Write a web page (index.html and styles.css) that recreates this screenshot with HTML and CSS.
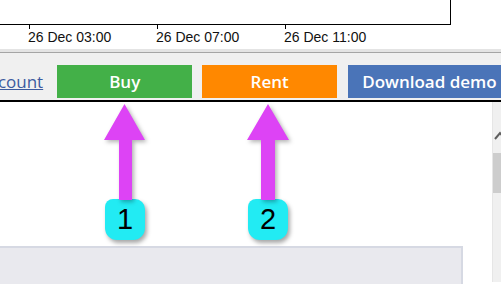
FILE: index.html
```html
<!DOCTYPE html>
<html lang="en">
<head>
  <meta charset="UTF-8">
  <title>Buy or rent</title>
  <link rel="stylesheet" href="styles.css">
</head>
<body>
  <!-- chart tail -->
  <div class="chart">
    <div class="plot"></div>
    <div class="axis">
      <div class="tick"><span class="mark"></span><span class="lbl">26 Dec 03:00</span></div>
      <div class="tick"><span class="mark"></span><span class="lbl">26 Dec 07:00</span></div>
      <div class="tick"><span class="mark"></span><span class="lbl">26 Dec 11:00</span></div>
    </div>
  </div>
  <div class="sep"></div>

  <!-- toolbar -->
  <div class="toolbar">
    <a class="acct" href="#">Account</a>
    <a class="btn buy" href="#">Buy</a>
    <a class="btn rent" href="#">Rent</a>
    <a class="btn demo" href="#">Download demo</a>
  </div>

  <div class="main">
    <div class="content">
      <div class="panel"></div>
    </div>
    <div class="scroll">
      <svg class="up" width="8" height="10" viewBox="0 0 8 10"><polyline points="2,8 7,2 12,8" fill="none" stroke="#5f5f5f" stroke-width="2"/></svg>
      <div class="thumb"></div>
    </div>
  </div>

  <!-- callouts -->
  <div class="note n1">
    <svg width="42" height="96" viewBox="0 0 42 96"><polygon points="20.5,0 41,36 28,36 28,96 15,96 15,36 0,36" fill="#dd43f5"/></svg>
    <div class="badge">1</div>
  </div>
  <div class="note n2">
    <svg width="42" height="96" viewBox="0 0 42 96"><polygon points="21,0 42,36 28,36 28,96 14,96 14,36 0,36" fill="#dd43f5"/></svg>
    <div class="badge">2</div>
  </div>
</body>
</html>
```
FILE: styles.css
```css
body {
  margin: 0;
  position: relative;
  overflow: hidden;
  height: 284px;
  background: #fff;
  font-family: "Open Sans", Arial, sans-serif;
}

.chart {
  height: 49px;
  background: #fff;
}

.plot {
  width: 450px;
  height: 24px;
  border-right: 1px solid #000;
  border-bottom: 1px solid #000;
}

.axis {
  display: flex;
  padding-left: 29px;
}

.tick {
  width: 128px;
}

.mark {
  display: block;
  width: 1px;
  height: 4px;
  background: #000;
}

.lbl {
  display: block;
  margin-left: -1px;
  font-family: "Liberation Sans", Arial, sans-serif;
  font-size: 14px;
  color: #111;
}

.sep {
  height: 3px;
  background: #e4e4e4;
  border-bottom: 1px solid #a5a5a5;
}

.toolbar {
  display: flex;
  align-items: flex-start;
  height: 49px;
  padding-top: 12px;
  box-sizing: border-box;
  background: #f0f0f0;
  border-bottom: 2px solid #000;
  white-space: nowrap;
}

.acct {
  margin-left: -21px;
  margin-right: 14px;
  line-height: 33px;
  font-size: 17px;
  color: #3c5a9f;
  flex-shrink: 0;
}

.btn {
  flex-shrink: 0;
  height: 33px;
  line-height: 33px;
  text-align: center;
  font-size: 17px;
  font-weight: 600;
  color: #fff;
  text-decoration: none;
}

.buy {
  width: 135px;
  margin-right: 10px;
  background: #43b048;
}

.rent {
  width: 135px;
  margin-right: 11px;
  background: #ff8800;
}

.demo {
  padding: 0 14px;
  background: #4a74b8;
}

.main {
  display: flex;
  height: 180px;
}

.content {
  flex: 1;
  padding-top: 144px;
}

.panel {
  width: 461px;
  height: 40px;
  background: #e9e9ee;
  border-top: 2px solid #d6d9e3;
  border-right: 2px solid #d6d9e3;
}

.scroll {
  width: 8px;
  overflow: hidden;
  background: #f0f0f0;
  border-left: 1px solid #e6e6e6;
}

.up {
  display: block;
  margin-top: 29px;
}

.thumb {
  height: 40px;
  margin-top: 12px;
  background: #cdcdcd;
}

.note {
  position: absolute;
  top: 104px;
  width: 42px;
}

.note svg {
  display: block;
  filter: drop-shadow(2px 2px 2px rgba(0, 0, 0, 0.3));
}

.n1 {
  left: 104px;
}

.n2 {
  left: 247px;
}

.badge {
  width: 40px;
  height: 41px;
  margin: -1px 0 0 1px;
  background: #22ebf3;
  border-radius: 8px 10px 12px 12px;
  box-shadow: 2px 3px 4px rgba(0, 0, 0, 0.35);
  text-align: center;
  line-height: 41px;
  font-family: "Liberation Sans", Arial, sans-serif;
  font-size: 29px;
  color: #000;
}
```
